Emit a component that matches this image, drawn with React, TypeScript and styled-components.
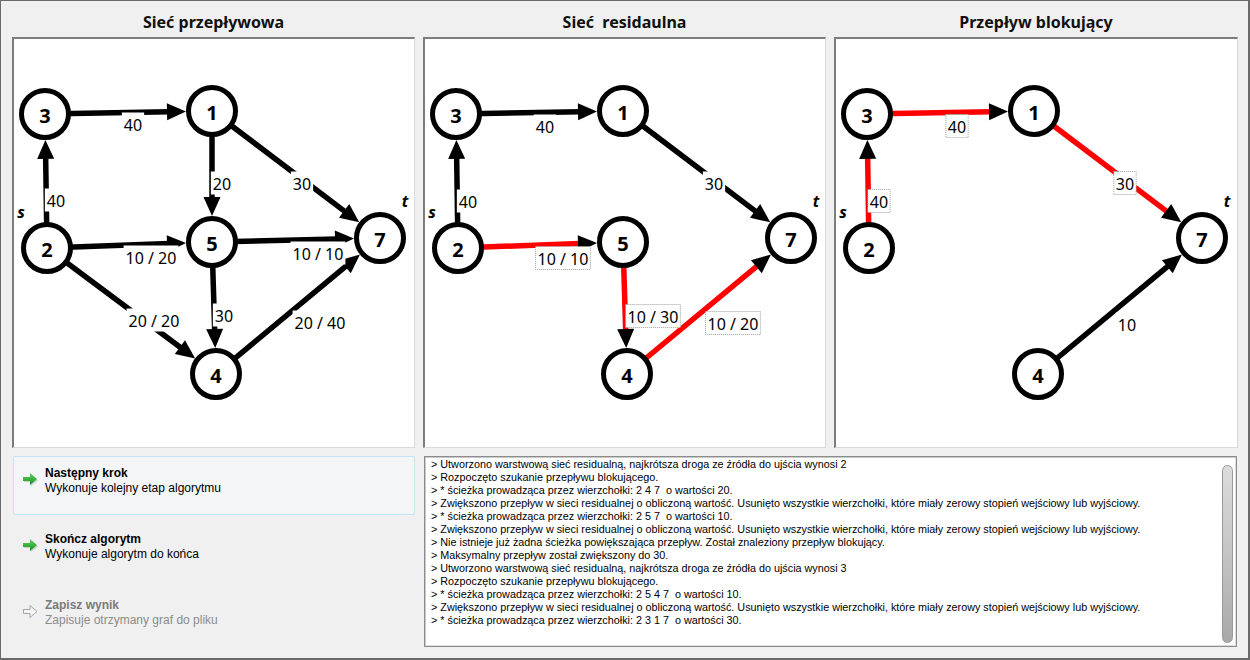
import React from 'react';
import styled, { createGlobalStyle } from 'styled-components';

const Global = createGlobalStyle`
  html, body { margin: 0; padding: 0; background: #f0f0f0; }
  #root { width: 1250px; height: 660px; }
`;

const Frame = styled.div`
  box-sizing: border-box;
  width: 1250px;
  height: 660px;
  border: 1px solid #6a6a6a;
  border-right-width: 2px;
  border-bottom-width: 2px;
  background: #f0f0f0;
  padding: 11px 0 0 11px;
  display: flex;
  flex-direction: column;
  gap: 8px;
`;

const TopRow = styled.div`
  display: grid;
  grid-template-columns: 403px 403px 404px;
  column-gap: 8px;
`;

const Column = styled.div`
  display: flex;
  flex-direction: column;
  gap: 5px;
`;

const Title = styled.div`
  height: 20px;
  line-height: 20px;
  text-align: center;
  font-family: 'Noto Sans', sans-serif;
  font-weight: 700;
  font-size: 16px;
  color: #111;
`;

const Panel = styled.div`
  box-sizing: border-box;
  height: 411px;
  background: #fff;
  border-top: 2px solid #7d7d7d;
  border-left: 2px solid #7d7d7d;
  border-right: 1px solid #dadada;
  border-bottom: 1px solid #dadada;
  overflow: hidden;
  svg { display: block; }
`;

const BottomRow = styled.div`
  display: grid;
  grid-template-columns: 403px 814px;
  column-gap: 8px;
  height: 191px;
`;

const ActionList = styled.div`
  display: flex;
  flex-direction: column;
  gap: 7px;
  padding-left: 1px;
`;

const Action = styled.div<{ $hover?: boolean }>`
  box-sizing: border-box;
  height: 59px;
  display: flex;
  align-items: flex-start;
  gap: 6px;
  padding: 9px 0 0 8px;
  border: 1px solid ${(p) => (p.$hover ? '#c3e4f3' : 'transparent')};
  border-radius: 2px;
  background: ${(p) => (p.$hover ? '#f3f5f6' : 'transparent')};
`;

const ActionIcon = styled.div`
  width: 17px;
  height: 17px;
  margin-top: 5px;
  svg { display: block; }
`;

const ActionText = styled.div<{ $disabled?: boolean }>`
  display: flex;
  flex-direction: column;
  font-family: 'Liberation Sans', Arial, sans-serif;
  font-size: 12px;
  line-height: 15px;
  color: ${(p) => (p.$disabled ? '#8c8c8c' : '#000')};
`;

const ActionTitle = styled.span<{ $disabled?: boolean }>`
  font-weight: 700;
  color: ${(p) => (p.$disabled ? '#7a7a7a' : '#000')};
`;

const LogBox = styled.div`
  box-sizing: border-box;
  margin-left: 1px;
  width: 813px;
  height: 191px;
  background: #fff;
  border: 1px solid #8c8c8c;
  box-shadow: inset 1px 1px 0 #c9c9c9, inset -1px -1px 0 #dedede;
  display: flex;
  padding: 1px;
`;

const LogText = styled.div`
  flex: 1;
  padding: 0 0 0 5px;
  font-family: 'Liberation Sans', Arial, sans-serif;
  font-size: 10.8px;
  line-height: 13px;
  color: #000;
  white-space: pre;
  overflow: hidden;
`;

const ScrollTrack = styled.div`
  width: 16px;
  display: flex;
  justify-content: center;
  padding: 7px 0 2px;
`;

const ScrollThumb = styled.div`
  width: 11px;
  height: 100%;
  box-sizing: border-box;
  border: 1px solid #9a9a9a;
  border-radius: 6px;
  background: linear-gradient(to bottom, #dcdcdc, #c4c4c4 50%, #a9a9a9);
`;

type Pt = [number, number];
type EdgeDef = {
  from: string;
  to: string;
  red?: boolean;
  label: string;
  lx: number;
  ly: number;
  dotted?: boolean;
};

const POS: Record<string, Pt> = {
  '3': [33, 77],
  '1': [200, 74],
  '7': [368, 201],
  '2': [35, 211],
  '5': [200, 205],
  '4': [204, 337],
};

const R_OUT = 26;

function textWidth(s: string) {
  let w = 0;
  for (const c of s) {
    if (c === ' ') w += 4.16;
    else if (c === '/') w += 5.9;
    else w += 9.15;
  }
  return w;
}

const Edge: React.FC<{ e: EdgeDef }> = ({ e }) => {
  const [x1, y1] = POS[e.from];
  const [x2, y2] = POS[e.to];
  const dx = x2 - x1;
  const dy = y2 - y1;
  const len = Math.hypot(dx, dy);
  const ux = dx / len;
  const uy = dy / len;
  const tx = x2 - ux * R_OUT;
  const ty = y2 - uy * R_OUT;
  const bx = tx - ux * 19;
  const by = ty - uy * 19;
  const nx = -uy * 8.5;
  const ny = ux * 8.5;
  return (
    <g>
      <line
        x1={x1}
        y1={y1}
        x2={bx + ux * 2}
        y2={by + uy * 2}
        stroke={e.red ? '#ff0000' : '#000'}
        strokeWidth={5.5}
      />
      <polygon
        points={`${tx},${ty} ${bx + nx},${by + ny} ${bx - nx},${by - ny}`}
        fill="#000"
      />
    </g>
  );
};

const Label: React.FC<{ e: EdgeDef }> = ({ e }) => {
  const w = textWidth(e.label) + 4;
  const h = 23;
  return (
    <g>
      <rect
        x={e.lx - w / 2}
        y={e.ly - h / 2}
        width={w}
        height={h}
        fill="#fff"
        stroke={e.dotted ? '#9f9f9f' : 'none'}
        strokeWidth={1}
        strokeDasharray="1 1"
      />
      <text
        x={e.lx}
        y={e.ly + 1}
        textAnchor="middle"
        dominantBaseline="central"
        fontFamily="'Noto Sans', sans-serif"
        fontSize={16}
        fill="#000"
      >
        {e.label}
      </text>
    </g>
  );
};

const NodeCircle: React.FC<{ id: string }> = ({ id }) => {
  const [x, y] = POS[id];
  return (
    <g>
      <circle cx={x} cy={y} r={23.5} fill="#fff" stroke="#000" strokeWidth={5} />
      <text
        x={x}
        y={y + 1}
        textAnchor="middle"
        dominantBaseline="central"
        fontFamily="'Noto Sans', sans-serif"
        fontWeight={700}
        fontSize={20}
        fill="#000"
      >
        {id}
      </text>
    </g>
  );
};

const Graph: React.FC<{ nodes: string[]; edges: EdgeDef[] }> = ({ nodes, edges }) => (
  <svg width={400} height={408} viewBox="2 2 400 408">
    {edges.map((e, i) => (
      <Edge key={'e' + i} e={e} />
    ))}
    {edges.map((e, i) => (
      <Label key={'l' + i} e={e} />
    ))}
    {nodes.map((n) => (
      <NodeCircle key={n} id={n} />
    ))}
    <text
      x={9}
      y={175}
      textAnchor="middle"
      dominantBaseline="central"
      fontFamily="'Noto Sans', sans-serif"
      fontWeight={700}
      fontStyle="italic"
      fontSize={16}
    >
      s
    </text>
    <text
      x={393}
      y={164}
      textAnchor="middle"
      dominantBaseline="central"
      fontFamily="'Noto Sans', sans-serif"
      fontWeight={700}
      fontStyle="italic"
      fontSize={16}
    >
      t
    </text>
  </svg>
);

const flowEdges: EdgeDef[] = [
  { from: '3', to: '1', label: '40', lx: 121, ly: 87 },
  { from: '1', to: '5', label: '20', lx: 210, ly: 146 },
  { from: '1', to: '7', label: '30', lx: 290, ly: 146 },
  { from: '2', to: '3', label: '40', lx: 44, ly: 163 },
  { from: '2', to: '5', label: '10 / 20', lx: 139, ly: 220 },
  { from: '5', to: '7', label: '10 / 10', lx: 306, ly: 216 },
  { from: '2', to: '4', label: '20 / 20', lx: 142, ly: 283 },
  { from: '5', to: '4', label: '30', lx: 212, ly: 278 },
  { from: '4', to: '7', label: '20 / 40', lx: 308, ly: 285 },
];

const residualEdges: EdgeDef[] = [
  { from: '3', to: '1', label: '40', lx: 122, ly: 89 },
  { from: '1', to: '7', label: '30', lx: 291, ly: 146 },
  { from: '2', to: '3', label: '40', lx: 45, ly: 164 },
  { from: '2', to: '5', red: true, dotted: true, label: '10 / 10', lx: 140, ly: 221 },
  { from: '5', to: '4', red: true, dotted: true, label: '10 / 30', lx: 230, ly: 279 },
  { from: '4', to: '7', red: true, dotted: true, label: '10 / 20', lx: 310, ly: 286 },
];

const blockingEdges: EdgeDef[] = [
  { from: '3', to: '1', red: true, dotted: true, label: '40', lx: 123, ly: 89 },
  { from: '1', to: '7', red: true, dotted: true, label: '30', lx: 291, ly: 146 },
  { from: '2', to: '3', red: true, dotted: true, label: '40', lx: 45, ly: 164 },
  { from: '4', to: '7', label: '10', lx: 293, ly: 287 },
];

const logLines = [
  '> Utworzono warstwową sieć residualną, najkrótsza droga ze źródła do ujścia wynosi 2',
  '> Rozpoczęto szukanie przepływu blokującego.',
  '> * ścieżka prowadząca przez wierzchołki: 2 4 7  o wartości 20.',
  '> Zwiększono przepływ w sieci residualnej o obliczoną wartość. Usunięto wszystkie wierzchołki, które miały zerowy stopień wejściowy lub wyjściowy.',
  '> * ścieżka prowadząca przez wierzchołki: 2 5 7  o wartości 10.',
  '> Zwiększono przepływ w sieci residualnej o obliczoną wartość. Usunięto wszystkie wierzchołki, które miały zerowy stopień wejściowy lub wyjściowy.',
  '> Nie istnieje już żadna ścieżka powiększająca przepływ. Został znaleziony przepływ blokujący.',
  '> Maksymalny przepływ został zwiększony do 30.',
  '> Utworzono warstwową sieć residualną, najkrótsza droga ze źródła do ujścia wynosi 3',
  '> Rozpoczęto szukanie przepływu blokującego.',
  '> * ścieżka prowadząca przez wierzchołki: 2 5 4 7  o wartości 10.',
  '> Zwiększono przepływ w sieci residualnej o obliczoną wartość. Usunięto wszystkie wierzchołki, które miały zerowy stopień wejściowy lub wyjściowy.',
  '> * ścieżka prowadząca przez wierzchołki: 2 3 1 7  o wartości 30.',
];

const ArrowIcon: React.FC<{ disabled?: boolean }> = ({ disabled }) => (
  <svg width={17} height={17} viewBox="0 0 17 17">
    <defs>
      <linearGradient id="ga" x1="0" y1="0" x2="0" y2="1">
        <stop offset="0" stopColor="#5fd35f" />
        <stop offset="1" stopColor="#17931d" />
      </linearGradient>
    </defs>
    {disabled ? (
      <path
        d="M1.5 6.5 H8 V2.5 L15 8.5 L8 14.5 V10.5 H1.5 Z"
        fill="#f7f7f7"
        stroke="#a5a5a5"
        strokeWidth={1}
        strokeLinejoin="round"
      />
    ) : (
      <>
        <path d="M2 8 H9 V4 L16 9.5 L9 15 V11 H2 Z" fill="#b8b8b8" opacity={0.6} />
        <path d="M1 6 H8 V2 L15 8 L8 14 V10 H1 Z" fill="url(#ga)" />
      </>
    )}
  </svg>
);

const actions = [
  { title: 'Następny krok', desc: 'Wykonuje kolejny etap algorytmu', hover: true },
  { title: 'Skończ algorytm', desc: 'Wykonuje algorytm do końca' },
  { title: 'Zapisz wynik', desc: 'Zapisuje otrzymany graf do pliku', disabled: true },
];

export default function App() {
  return (
    <>
      <Global />
      <Frame>
        <TopRow>
          <Column>
            <Title>Sieć przepływowa</Title>
            <Panel>
              <Graph nodes={['3', '1', '7', '2', '5', '4']} edges={flowEdges} />
            </Panel>
          </Column>
          <Column>
            <Title>Sieć&nbsp; residaulna</Title>
            <Panel>
              <Graph nodes={['3', '1', '7', '2', '5', '4']} edges={residualEdges} />
            </Panel>
          </Column>
          <Column>
            <Title>Przepływ blokujący</Title>
            <Panel>
              <Graph nodes={['3', '1', '7', '2', '4']} edges={blockingEdges} />
            </Panel>
          </Column>
        </TopRow>
        <BottomRow>
          <ActionList>
            {actions.map((a) => (
              <Action key={a.title} $hover={a.hover}>
                <ActionIcon>
                  <ArrowIcon disabled={a.disabled} />
                </ActionIcon>
                <ActionText $disabled={a.disabled}>
                  <ActionTitle $disabled={a.disabled}>{a.title}</ActionTitle>
                  <span>{a.desc}</span>
                </ActionText>
              </Action>
            ))}
          </ActionList>
          <LogBox>
            <LogText>
              {logLines.map((l, i) => (
                <div key={i}>{l}</div>
              ))}
            </LogText>
            <ScrollTrack>
              <ScrollThumb />
            </ScrollTrack>
          </LogBox>
        </BottomRow>
      </Frame>
    </>
  );
}
